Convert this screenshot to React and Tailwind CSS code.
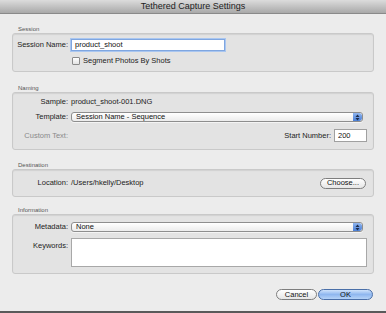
import React from 'react';

const font = { fontFamily: '"Liberation Sans", Arial, sans-serif' };

function SectionLabel({ text, className = '' }) {
  return (
    <div className={`h-[6px] pl-[6px] text-[6px] leading-[6px] text-[#555] ${className}`}>
      {text}
    </div>
  );
}

function Box({ children, className = '' }) {
  return (
    <div
      className={`mt-[1px] rounded-[3px] border border-[#c9c9c9] bg-[#e3e3e3] shadow-[inset_0_1px_1px_rgba(0,0,0,0.08)] ${className}`}
    >
      {children}
    </div>
  );
}

function Label({ text, dim }) {
  return (
    <div
      className={`w-[58px] shrink-0 whitespace-nowrap pr-[3px] text-right text-[7.5px] ${
        dim ? 'text-[#8a8a8a]' : 'text-[#222]'
      }`}
    >
      {text}
    </div>
  );
}

function Stepper() {
  return (
    <div className="flex h-full w-[9px] items-center justify-center rounded-r-[3px] bg-gradient-to-b from-[#8fb4ee] to-[#4a7fd6]">
      <svg width="5" height="7" viewBox="0 0 5 7">
        <path d="M2.5 0.5 L4.5 3 L0.5 3 Z" fill="#1d2c4a" />
        <path d="M2.5 6.5 L4.5 4 L0.5 4 Z" fill="#1d2c4a" />
      </svg>
    </div>
  );
}

function Select({ value }) {
  return (
    <div className="flex h-[10px] w-[292px] items-center overflow-hidden rounded-[3px] border border-[#8e8e8e] bg-gradient-to-b from-white to-[#ececec] shadow-[0_1px_0_rgba(255,255,255,0.6)]">
      <div className="flex-1 pl-[4px] text-[7.5px] leading-[8px] text-[#111]">{value}</div>
      <Stepper />
    </div>
  );
}

function PillButton({ text, primary, className = '' }) {
  return (
    <div
      className={`flex h-[11px] items-center justify-center rounded-full border text-[7.5px] leading-[8px] ${
        primary
          ? 'border-[#4a6fa8] bg-gradient-to-b from-[#cfe2fb] via-[#8fb7ef] to-[#b6d3f7] text-[#111]'
          : 'border-[#7e7e7e] bg-gradient-to-b from-white to-[#e6e6e6] text-[#111]'
      } ${className}`}
    >
      {text}
    </div>
  );
}

export default function App() {
  return (
    <div className="flex h-[313px] w-[386px] flex-col bg-[#ececec]" style={font}>
      <div className="flex h-[14px] shrink-0 items-center justify-center border-b border-[#8a8a8a] bg-gradient-to-b from-[#dcdcdc] to-[#a9a9a9] text-[9px] text-[#222]">
        Tethered Capture Settings
      </div>

      <div className="flex flex-1 flex-col px-[12px]">
        <SectionLabel text="Session" className="mt-[12px]" />
        <Box className="h-[39px] pt-[5px]">
          <div className="flex h-[12px] items-center">
            <Label text="Session Name:" />
            <div className="flex h-[12px] w-[154px] items-center border border-[#7fa6e0] bg-white pl-[3px] text-[7.5px] text-[#111] shadow-[0_0_0_1px_#a9c6f0]">
              product_shoot
            </div>
          </div>
          <div className="mt-[5px] flex h-[10px] items-center pl-[59px]">
            <div className="h-[8px] w-[8px] rounded-[1px] border border-[#8a8a8a] bg-gradient-to-b from-white to-[#e2e2e2]" />
            <div className="pl-[3px] text-[7.5px] text-[#222]">Segment Photos By Shots</div>
          </div>
        </Box>

        <SectionLabel text="Naming" className="mt-[13px]" />
        <Box className="h-[58px] pt-[4px]">
          <div className="flex h-[10px] items-center">
            <Label text="Sample:" />
            <div className="text-[7.5px] text-[#222]">product_shoot-001.DNG</div>
          </div>
          <div className="mt-[5px] flex h-[10px] items-center">
            <Label text="Template:" />
            <Select value="Session Name - Sequence" />
          </div>
          <div className="mt-[7px] flex h-[13px] items-center">
            <Label text="Custom Text:" dim />
            <div className="flex-1" />
            <div className="pr-[3px] text-[7.5px] text-[#222]">Start Number:</div>
            <div className="mr-[6px] flex h-[13px] w-[33px] items-center border border-[#a0a0a0] bg-white pl-[3px] text-[7.5px] text-[#111]">
              200
            </div>
          </div>
        </Box>

        <SectionLabel text="Destination" className="mt-[12px]" />
        <Box className="flex h-[28px] items-center">
          <Label text="Location:" />
          <div className="flex-1 text-[7.5px] text-[#222]">/Users/hkelly/Desktop</div>
          <PillButton text="Choose..." className="mr-[7px] w-[46px]" />
        </Box>

        <SectionLabel text="Information" className="mt-[10px]" />
        <Box className="h-[60px] pt-[7px]">
          <div className="flex h-[10px] items-center">
            <Label text="Metadata:" />
            <Select value="None" />
          </div>
          <div className="mt-[6px] flex items-start">
            <div className="pt-[2px]">
              <Label text="Keywords:" />
            </div>
            <div className="h-[29px] w-[296px] border border-[#a8a8a8] bg-white" />
          </div>
        </Box>

        <div className="mt-[15px] flex justify-end gap-[1px] pr-[1px]">
          <PillButton text="Cancel" className="w-[41px]" />
          <PillButton text="OK" primary className="w-[55px]" />
        </div>
      </div>

      <div className="h-[2px] shrink-0 bg-[#5a5a5a]" />
    </div>
  );
}
